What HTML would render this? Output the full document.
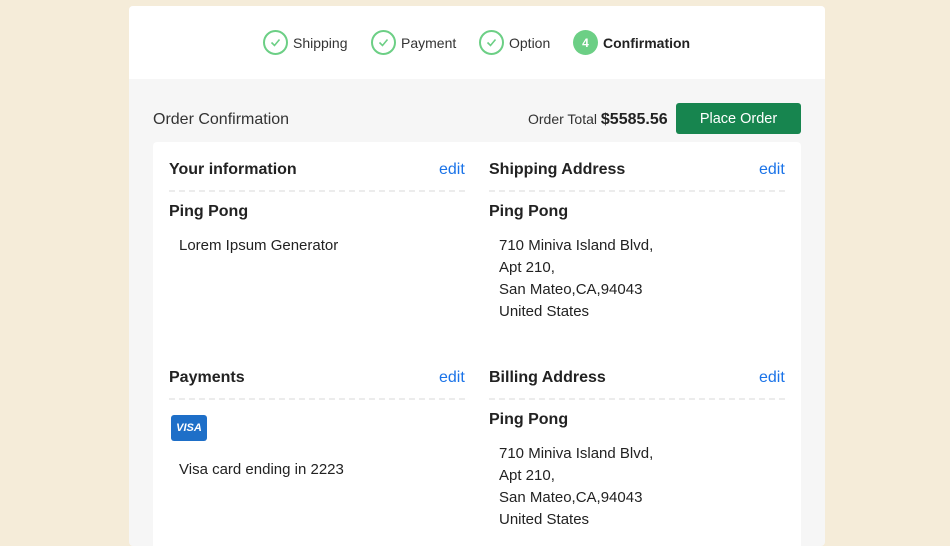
<!DOCTYPE html>
<html><head><meta charset="utf-8"><style>
*{margin:0;padding:0;box-sizing:border-box}
body{width:950px;height:536px;overflow:hidden;background:#f5ecd9;font-family:"Liberation Sans",Arial,sans-serif;color:#222;position:relative}
.card{position:absolute;left:129px;top:6px;width:696px;height:540px;background:#f6f6f6;border-radius:4px;overflow:hidden}
.head{position:absolute;left:0;top:0;width:696px;height:73px;background:#fff}
.a{position:absolute;white-space:nowrap}
.step{position:absolute;top:24px;display:flex;align-items:center;font-size:14px;color:#333}
.ci{width:25px;height:25px;border:2px solid #6ccf85;border-radius:50%;margin-right:5px;display:flex;align-items:center;justify-content:center}
.num{width:25px;height:25px;background:#6ccf85;border-radius:50%;margin-right:5px;color:#fff;font-size:12px;font-weight:bold;display:flex;align-items:center;justify-content:center}
.panel{position:absolute;left:24px;top:136px;width:648px;height:420px;background:#fff;border-radius:4px}
.h{font-size:16px;font-weight:bold;color:#222}
.edit{font-size:16px;color:#1a73e8}
.dash{position:absolute;height:0;border-top:2px dashed #ececec;width:296px}
.name{font-size:16px;font-weight:bold}
.t{font-size:15px;line-height:22px;color:#222}
.btn{position:absolute;left:547px;top:97px;width:125px;height:31px;background:#17854f;border-radius:3px;color:#fff;font-size:14.5px;display:flex;align-items:center;justify-content:center}
</style></head><body>
<div class="card">
<div class="head">
<div class="step" style="left:134px"><div class="ci"><svg width="11" height="9" viewBox="0 0 11 9"><path d="M1.5 4.5l3 3 5-6" fill="none" stroke="#6ccf85" stroke-width="1.6"/></svg></div>Shipping</div>
<div class="step" style="left:242px"><div class="ci"><svg width="11" height="9" viewBox="0 0 11 9"><path d="M1.5 4.5l3 3 5-6" fill="none" stroke="#6ccf85" stroke-width="1.6"/></svg></div>Payment</div>
<div class="step" style="left:350px"><div class="ci"><svg width="11" height="9" viewBox="0 0 11 9"><path d="M1.5 4.5l3 3 5-6" fill="none" stroke="#6ccf85" stroke-width="1.6"/></svg></div>Option</div>
<div class="step" style="left:444px;font-weight:bold;color:#222"><div class="num">4</div>Confirmation</div>
</div>
<div class="a" style="left:24px;top:105px;font-size:16px;color:#333">Order Confirmation</div>
<div class="a" style="left:399px;top:105px;font-size:14px;color:#333">Order Total <b style="font-size:16px;color:#222">$5585.56</b></div>
<div class="btn">Place Order</div>
<div class="panel">
<div class="a h" style="left:16px;top:19px">Your information</div>
<div class="a edit" style="left:286px;top:19px">edit</div>
<div class="dash" style="left:16px;top:48px"></div>
<div class="a name" style="left:16px;top:61px">Ping Pong</div>
<div class="a t" style="left:26px;top:93px">Lorem Ipsum Generator</div>

<div class="a h" style="left:336px;top:19px">Shipping Address</div>
<div class="a edit" style="left:606px;top:19px">edit</div>
<div class="dash" style="left:336px;top:48px"></div>
<div class="a name" style="left:336px;top:61px">Ping Pong</div>
<div class="a t" style="left:346px;top:93px">710 Miniva Island Blvd,<br>Apt 210,<br>San Mateo,CA,94043<br>United States</div>

<div class="a h" style="left:16px;top:227px">Payments</div>
<div class="a edit" style="left:286px;top:227px">edit</div>
<div class="dash" style="left:16px;top:256px"></div>
<div class="a" style="left:18px;top:273px;width:36px;height:26px;background:#1e6fc8;border-radius:3px;color:#fff;font-size:11px;font-weight:bold;font-style:italic;display:flex;align-items:center;justify-content:center">VISA</div>
<div class="a t" style="left:26px;top:317px">Visa card ending in 2223</div>

<div class="a h" style="left:336px;top:227px">Billing Address</div>
<div class="a edit" style="left:606px;top:227px">edit</div>
<div class="dash" style="left:336px;top:256px"></div>
<div class="a name" style="left:336px;top:269px">Ping Pong</div>
<div class="a t" style="left:346px;top:301px">710 Miniva Island Blvd,<br>Apt 210,<br>San Mateo,CA,94043<br>United States</div>
</div>
</div>
</body></html>
